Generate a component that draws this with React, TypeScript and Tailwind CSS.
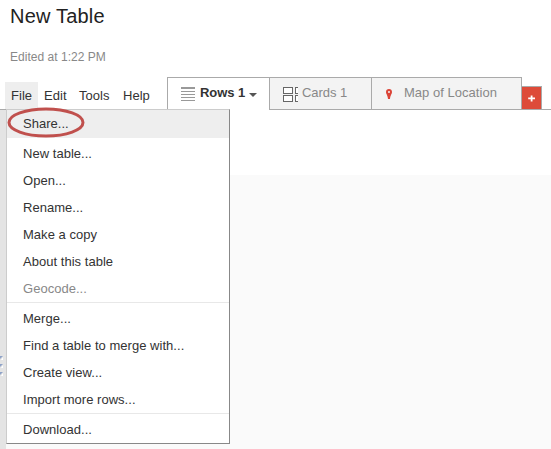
import React from "react";

type Item = { label: string; disabled?: boolean };

const groups: Item[][] = [
  [
    { label: "New table..." },
    { label: "Open..." },
    { label: "Rename..." },
    { label: "Make a copy" },
    { label: "About this table" },
    { label: "Geocode...", disabled: true },
  ],
  [
    { label: "Merge..." },
    { label: "Find a table to merge with..." },
    { label: "Create view..." },
    { label: "Import more rows..." },
  ],
  [{ label: "Download..." }],
];

function RowsIcon() {
  return (
    <svg width="14" height="15" className="block shrink-0" shapeRendering="crispEdges" fill="#999">
      <rect width="14" height="2" />
      <rect y="4" width="14" height="1" />
      <rect y="7" width="14" height="1" />
      <rect y="10" width="14" height="1" />
      <rect y="13" width="14" height="1" />
    </svg>
  );
}

function CardsIcon() {
  return (
    <svg width="15" height="15" className="block shrink-0" shapeRendering="crispEdges" fill="none" stroke="#666">
      <rect x=".5" y=".5" width="9" height="6" fill="white" />
      <rect x=".5" y="8.5" width="9" height="6" fill="white" />
      <path d="M15 .5h-2.5v6H15M15 8.5h-2.5v6H15" fill="white" />
    </svg>
  );
}

export default function App() {
  return (
    <div className="h-[449px] w-[551px] overflow-hidden whitespace-nowrap bg-white font-['Liberation_Sans',Arial,sans-serif] text-[13px] leading-5 tracking-[0.03px] text-[#333]">
      <header className="flex h-[77px] flex-col pl-[10px]">
        <h1 className="mt-[6px] text-[20px] leading-5 tracking-[0.2px] text-[#222]">New Table</h1>
        <p className="mt-[21px] text-[12px] leading-5 text-[#888]">Edited at 1:22 PM</p>
      </header>

      <div className="flex h-[33px] items-end border-b border-[#aaa] pl-[5px]">
        <nav className="flex h-[27px] w-[162px] shrink-0 items-start">
          <div className="h-[27px] w-[33px] bg-[#eee] pl-[6px] pt-[4px]">File</div>
          <div className="w-[35px] pl-[6px] pt-[4px]">Edit</div>
          <div className="w-[45px] pl-[6px] pt-[4px]">Tools</div>
          <div className="pl-[5px] pt-[4px]">Help</div>
        </nav>
        <div className="-mb-px flex h-[33px] w-[103px] shrink-0 border border-b-0 border-[#aaa] bg-white pl-[13px]">
          <div className="pt-[9px]"><RowsIcon /></div>
          <span className="ml-[5px] mt-[5px] w-[47px] font-bold tracking-[-0.08px]">Rows 1</span>
          <svg width="8" height="4" className="ml-[2px] mt-[15px] shrink-0" fill="#555"><path d="M0 0h8L4 4z" /></svg>
        </div>
        <div className="flex h-[32px] w-[102px] shrink-0 border-r border-t border-[#aaa] bg-[#f3f3f3] pl-[13px] text-[#888]">
          <div className="pt-[9px]"><CardsIcon /></div>
          <span className="ml-[4px] mt-[5px] tracking-[-0.05px]">Cards 1</span>
        </div>
        <div className="flex h-[32px] w-[150px] shrink-0 border-r border-t border-[#aaa] bg-[#f3f3f3] pl-[14px] text-[#888]">
          <svg width="6" height="10" viewBox="0 0 6 10" className="mt-[11px] shrink-0" fill="#db4437">
            <path fillRule="evenodd" d="M3 0C1.1 0 0 1.3 0 3c0 2 1.7 3.2 2 7h2c.3-3.8 2-5 2-7 0-1.7-1.1-3-3-3M3 2a1 1 0 1 1 0 2 1 1 0 0 1 0-2" />
          </svg>
          <span className="ml-[12px] mt-[5px]">Map of Location</span>
        </div>
        <div className="flex h-[23px] w-[20px] shrink-0 justify-center border-r border-t border-[#aaa] bg-[#dd4b39] pt-[8px]">
          <svg width="7" height="7" className="block" fill="white"><path d="M2.7 .5h1.8v2H7v1.8H4.5v2.2H2.7V4.3H.2V2.5h2.5z" /></svg>
        </div>
      </div>

      <main className="relative flex h-[339px]">
        <div className="flex w-[6px] flex-col gap-[4px] overflow-hidden bg-[#e4e4e4] pt-[246px]">
          {[0, 1, 2].map((i) => (
            <svg key={i} width="4" height="4" className="block shrink-0"><path d="M0 0h3L0 3z" fill="#8fa3c8" /><path d="M1 4h2V1z" fill="#fff" /></svg>
          ))}
        </div>
        <div className="flex-1 pt-[65px]"><div className="h-full bg-[#fafafa]" /></div>

        <div className="absolute left-[6px] top-[-1px] h-[335px] w-[224px] border border-b-[#888] border-l-[#ccc] border-r-[#888] border-t-[#ccc] bg-white">
          <div className="h-[28px] bg-[#eee] pl-[16px] pt-[4px]">Share...</div>
          {groups.map((group, index) => (
            <div key={index} className={index === 0 ? "pt-[2px]" : "border-t border-[#e8e8e8] pt-[2px]"}>
              {group.map((item) => (
                <div key={item.label} className={`h-[27px] pl-[16px] pt-[4px] ${item.disabled ? "text-[#888]" : ""}`}>
                  {item.label}
                </div>
              ))}
            </div>
          ))}
        </div>
        <svg width="80" height="32" className="pointer-events-none absolute left-[6px] top-[-4px]">
          <ellipse cx="40" cy="16.5" rx="37" ry="13.5" fill="none" stroke="#c0504d" strokeWidth="3" />
        </svg>
      </main>
    </div>
  );
}
